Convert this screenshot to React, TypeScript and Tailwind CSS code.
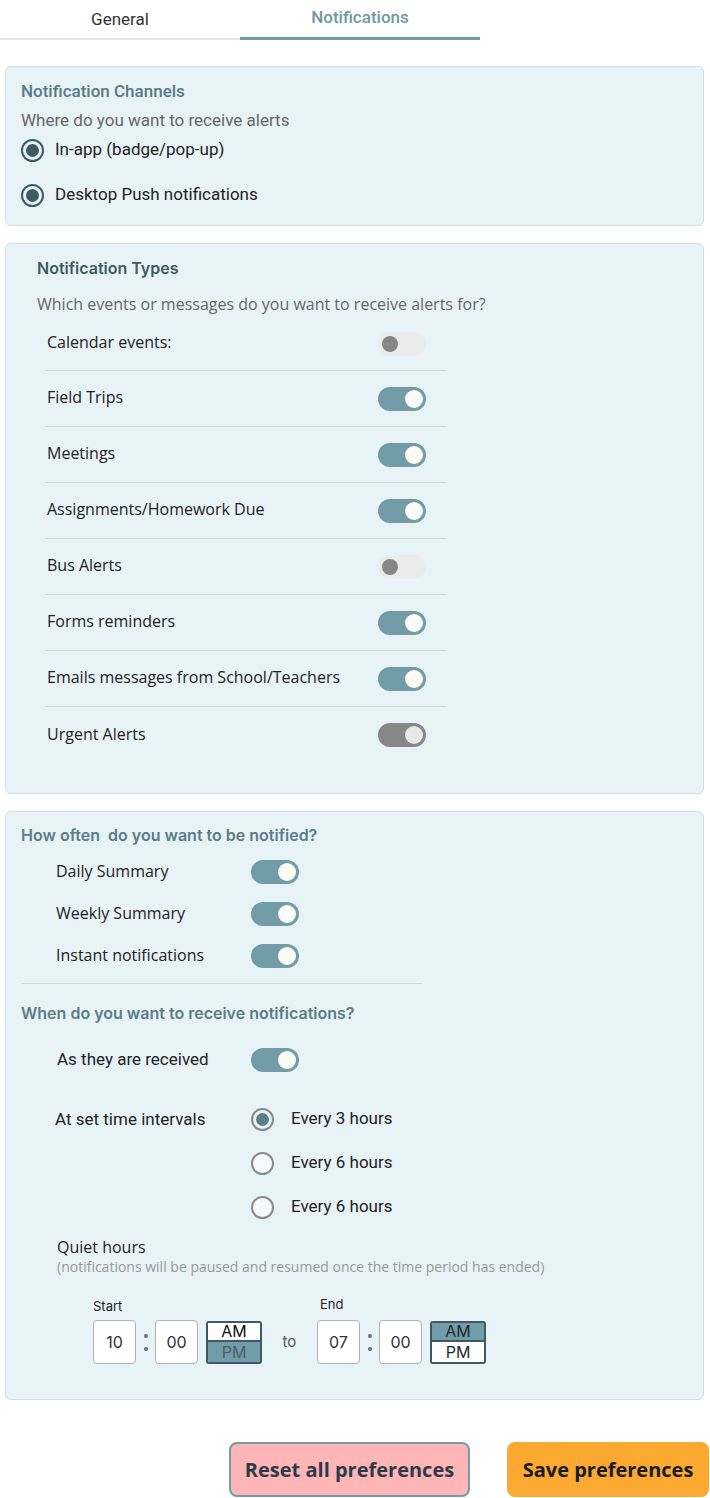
import { useState } from 'react'

const roboto = "font-['Roboto',sans-serif]"
const open = "font-['Open_Sans',sans-serif]"
const inter = "font-['Inter',sans-serif]"

type ToggleState = 'on' | 'off' | 'disabled'

const Toggle = ({ state }: { state: ToggleState }) => {
    if (state === 'off') {
        return (
            <div className="w-[48px] h-[24px] rounded-full bg-[#ebebeb] flex items-center pl-[4px] shrink-0">
                <div className="w-[16px] h-[16px] rounded-full bg-[#878787]" />
            </div>
        )
    }
    return (
        <div className={`w-[48px] h-[24px] rounded-full flex items-center justify-end pr-[3px] shrink-0 ${state === 'on' ? 'bg-[#729ca8]' : 'bg-[#878787]'}`}>
            <div className={`w-[18px] h-[18px] rounded-full ${state === 'on' ? 'bg-[#fdfcf4]' : 'bg-[#e8e8e8]'}`} />
        </div>
    )
}

const ChannelRadio = ({ label }: { label: string }) => (
    <div className="flex items-center h-[24px]">
        <div className="w-[23px] h-[23px] rounded-full border-[2.5px] border-[#3e5a62] flex items-center justify-center bg-[#e8f3f8]">
            <div className="w-[13px] h-[13px] rounded-full bg-[#3e5a62]" />
        </div>
        <span className={`${roboto} ml-[11px] text-[17px] text-[#222]`}>{label}</span>
    </div>
)

const IntervalRadio = ({ label, checked }: { label: string; checked?: boolean }) => (
    <div className="flex items-center h-[24px]">
        <div className={`w-[23px] h-[23px] rounded-full border-[2px] border-[#8a8a8a] flex items-center justify-center ${checked ? 'bg-[#e8f3f8]' : 'bg-[#f8f9fb]'}`}>
            {checked && <div className="w-[13px] h-[13px] rounded-full bg-[#5d7f88]" />}
        </div>
        <span className={`${roboto} ml-[17px] text-[17px] text-[#222]`}>{label}</span>
    </div>
)

const TimeBox = ({ value }: { value: string }) => (
    <div className={`${inter} w-[43px] h-[44px] bg-white border-[1.5px] border-[#b0b0b0] rounded-[4px] flex items-center justify-center text-[16px] text-[#333]`}>
        {value}
    </div>
)

const Colon = () => (
    <div className="w-[19px] flex flex-col items-center justify-center gap-[9px]">
        <div className="w-[4px] h-[4px] rounded-full bg-[#557780]" />
        <div className="w-[4px] h-[4px] rounded-full bg-[#557780]" />
    </div>
)

const AmPm = ({ am }: { am: boolean }) => (
    <div className={`${inter} w-[56px] h-[43px] border-[2px] border-[#3e5a62] rounded-[3px] flex flex-col overflow-hidden text-[16px] leading-none`}>
        <div className={`h-1/2 flex items-center justify-center border-b-[2px] border-[#3e5a62] ${am ? 'bg-[#729ca8] text-[#1c2a2e]' : 'bg-white text-[#111]'}`}>AM</div>
        <div className={`flex-1 flex items-center justify-center ${am ? 'bg-white text-[#1c2a2e]' : 'bg-[#729ca8] text-[#47626a]'}`}>PM</div>
    </div>
)

const types: { label: string; state: ToggleState }[] = [
    { label: 'Calendar events:', state: 'off' },
    { label: 'Field Trips', state: 'on' },
    { label: 'Meetings', state: 'on' },
    { label: 'Assignments/Homework Due', state: 'on' },
    { label: 'Bus Alerts', state: 'off' },
    { label: 'Forms reminders', state: 'on' },
    { label: 'Emails messages from School/Teachers', state: 'on' },
    { label: 'Urgent Alerts', state: 'disabled' },
]

const App = () => {
    const [tab] = useState('notifications')

    return (
        <div className="w-[710px] bg-white min-h-[1498px]">
            {/* tabs */}
            <div className={`${roboto} flex text-[17px]`}>
                <div className="w-[240px] h-[40px] flex justify-center pt-[7px] border-b-[2px] border-[#e6e6e6] text-[#333]">General</div>
                <div className={`w-[240px] h-[40px] flex justify-center pt-[5px] border-b-[3px] border-[#729ca8] font-medium text-[#6f98a3] ${tab === 'notifications' ? '' : ''}`}>Notifications</div>
            </div>

            <div className="pl-[5px] pr-[6px] mt-[26px] flex flex-col gap-[17px]">
                {/* channels */}
                <div className="h-[160px] bg-[#e8f3f8] border border-[#d2dde0] rounded-[6px] px-[15px] pt-[14px]">
                    <div className={`${roboto} text-[17px] leading-[20px] font-medium text-[#587a82]`}>Notification Channels</div>
                    <div className={`${roboto} text-[17px] leading-[24px] text-[#666] mt-[7px]`}>Where do you want to receive alerts</div>
                    <div className="flex flex-col gap-[21px] mt-[6px]">
                        <ChannelRadio label="In-app (badge/pop-up)" />
                        <ChannelRadio label="Desktop Push notifications" />
                    </div>
                </div>

                {/* types */}
                <div className="h-[551px] bg-[#e8f3f8] border border-[#d2dde0] rounded-[6px] pl-[31px] pt-[14px]">
                    <div className={`${inter} text-[16px] leading-[20px] font-semibold text-[#3e5a62]`}>Notification Types</div>
                    <div className={`${open} text-[16px] leading-[24px] text-[#666] mt-[14px]`}>Which events or messages do you want to receive alerts for?</div>
                    <div className="w-[401px] ml-[8px] mt-[1px]">
                        {types.map((t, i) => (
                            <div key={t.label} className={`flex items-center justify-between pl-[2px] pr-[20px] ${i === 0 ? 'h-[54px]' : 'h-[56px]'} ${i < types.length - 1 ? 'border-b border-[#cfd8da]' : ''}`}>
                                <span className={`${open} text-[16px] text-[#222] mb-[3px]`}>{t.label}</span>
                                <Toggle state={t.state} />
                            </div>
                        ))}
                    </div>
                </div>

                {/* frequency */}
                <div className="h-[589px] bg-[#e8f3f8] border border-[#d2dde0] rounded-[6px] px-[15px] pt-[13px]">
                    <div className={`${inter} text-[16px] leading-[20px] font-semibold text-[#5a7d86] whitespace-pre`}>How often  do you want to be notified?</div>
                    <div className="flex flex-col mt-[6px]">
                        {['Daily Summary', 'Weekly Summary', 'Instant notifications'].map((l) => (
                            <div key={l} className="flex items-center h-[42px] pl-[35px]">
                                <span className={`${open} w-[195px] text-[16px] text-[#222] mb-[2px]`}>{l}</span>
                                <Toggle state="on" />
                            </div>
                        ))}
                    </div>
                    <div className="w-[401px] border-b border-[#cfd8da] mt-[6px]" />
                    <div className={`${inter} text-[16px] leading-[20px] font-semibold text-[#5a7d86] mt-[19px]`}>When do you want to receive notifications?</div>

                    <div className="flex items-center h-[24px] mt-[25px] pl-[36px]">
                        <span className={`${roboto} w-[194px] text-[17px] text-[#222]`}>As they are received</span>
                        <Toggle state="on" />
                    </div>

                    <div className="flex mt-[35px] pl-[34px]">
                        <span className={`${roboto} w-[196px] text-[17px] leading-[24px] text-[#222]`}>At set time intervals</span>
                        <div className="flex flex-col gap-[20px]">
                            <IntervalRadio label="Every 3 hours" checked />
                            <IntervalRadio label="Every 6 hours" />
                            <IntervalRadio label="Every 6 hours" />
                        </div>
                    </div>

                    <div className="pl-[36px] mt-[17px]">
                        <div className={`${open} text-[16px] leading-[22px] text-[#222]`}>Quiet hours</div>
                        <div className={`${open} text-[14px] leading-[18px] text-[#999]`}>(notifications will be paused and resumed once the time period has ended)</div>

                        <div className="flex items-end mt-[19px] pl-[36px]">
                            <div className="flex flex-col">
                                <span className={`${inter} text-[13px] leading-[18px] text-[#222] mb-[5px]`}>Start</span>
                                <div className="flex items-center">
                                    <TimeBox value="10" />
                                    <Colon />
                                    <TimeBox value="00" />
                                    <div className="ml-[8px]"><AmPm am={false} /></div>
                                </div>
                            </div>
                            <span className={`${inter} h-[44px] flex items-center w-[55px] justify-center text-[15px] text-[#555]`}>to</span>
                            <div className="flex flex-col">
                                <span className={`${inter} text-[13px] leading-[18px] text-[#222] mb-[7px] ml-[3px]`}>End</span>
                                <div className="flex items-center">
                                    <TimeBox value="07" />
                                    <Colon />
                                    <TimeBox value="00" />
                                    <div className="ml-[8px]"><AmPm am={true} /></div>
                                </div>
                            </div>
                        </div>
                    </div>
                </div>
            </div>

            {/* actions */}
            <div className={`${open} flex justify-end gap-[37px] pr-[1px] mt-[42px]`}>
                <button className="w-[241px] h-[55px] rounded-[8px] bg-[#feb5b5] border-[2px] border-[#729ca8] text-[20px] font-bold text-[#2d3a4a]">Reset all preferences</button>
                <button className="w-[202px] h-[55px] rounded-[8px] bg-[#fba930] text-[20px] font-bold text-[#1a1a1a]">Save preferences</button>
            </div>
        </div>
    )
}

export default App
